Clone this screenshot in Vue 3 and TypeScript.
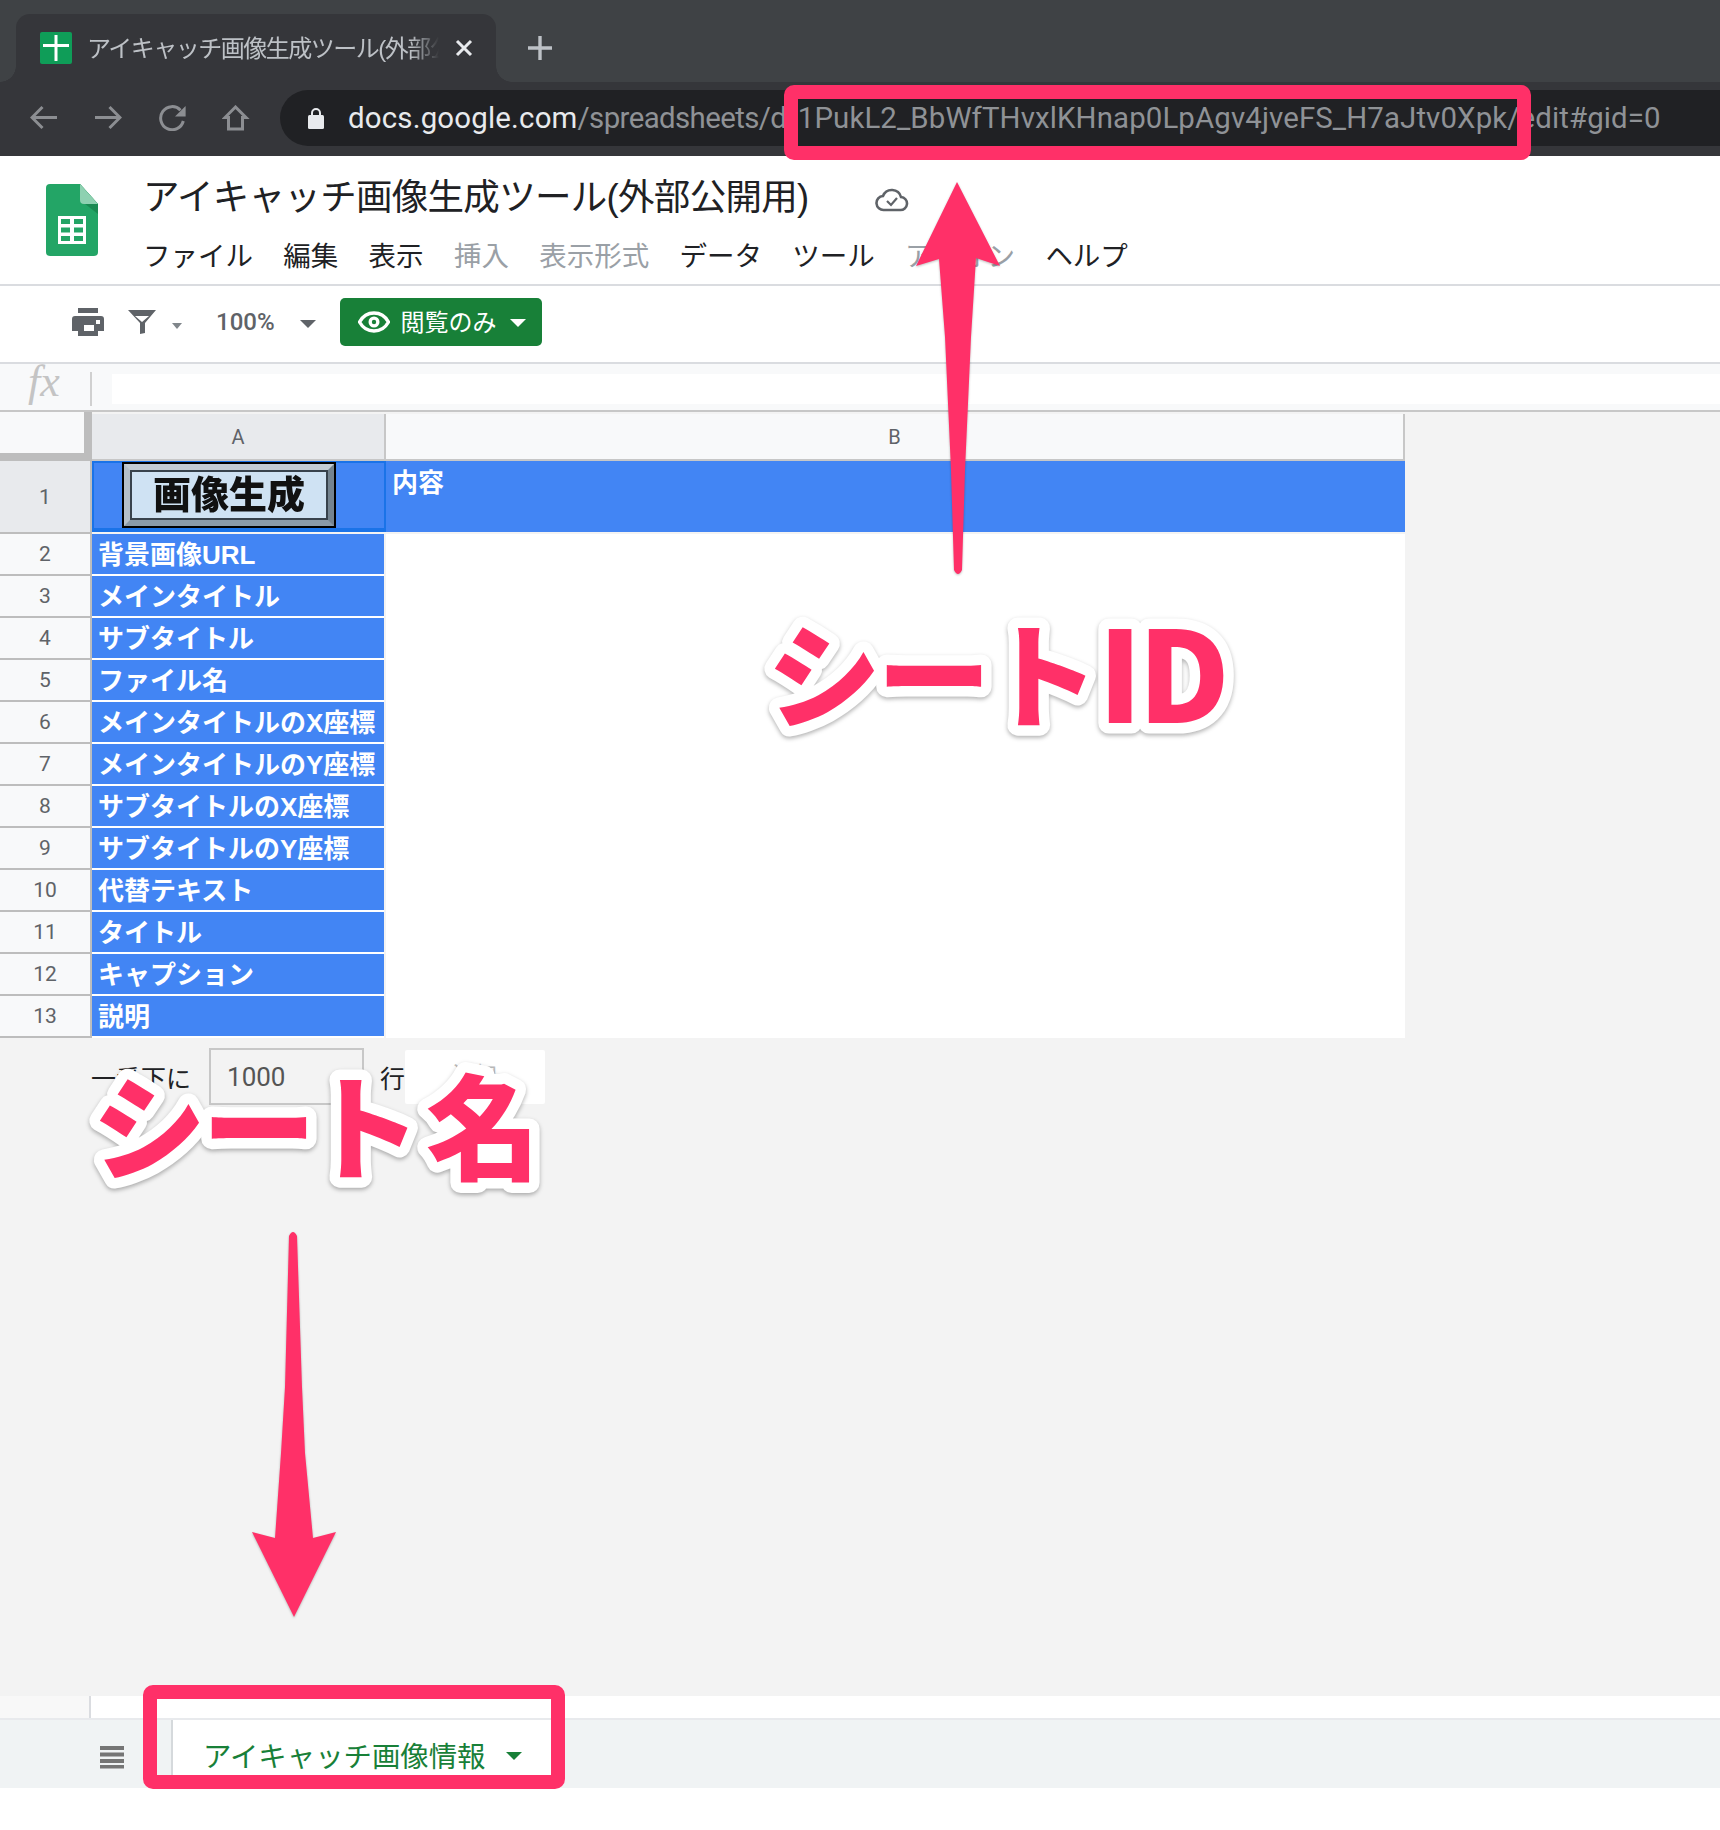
<template>
  <div class="page">
    <div class="tabstrip">
      <div class="tab">
        <svg class="favicon" viewBox="0 0 32 32"><rect width="32" height="32" rx="2" fill="#0f9d58" /><path d="M14.5 3h3v26h-3zM3 12h26v3H3z" fill="#fff" /></svg>
        <span class="tab-title">アイキャッチ画像生成ツール(外部公開用)</span>
        <svg class="tab-close" viewBox="0 0 18 18"><path d="M2 2l14 14M16 2L2 16" stroke="#e8eaed" stroke-width="3" fill="none" /></svg>
      </div>
      <svg class="newtab" viewBox="0 0 24 24"><path d="M12 0v24M0 12h24" stroke="#bdc1c6" stroke-width="3.4" fill="none" /></svg>
    </div>

    <div class="navbar">
      <div class="navicons">
        <svg viewBox="0 0 28 26"><path d="M27 12.500H2M12.500 2L2 12.500 12.500 23" /></svg>
        <svg viewBox="0 0 28 26"><path d="M1 12.500h25M15.500 2L26 12.500 15.500 23" /></svg>
        <svg viewBox="0 0 28 26"><path d="M22.500 5.200A11.500 11.500 0 1 0 25.300 16" /><path d="M27.600 1v10.600H17z" class="solid" /></svg>
        <svg viewBox="0 0 28 26"><path d="M13.500 2L3 12.500h3.500V24h14V12.500H24z" /></svg>
      </div>
      <div class="omnibox">
        <svg class="lock" viewBox="0 0 16 22"><path d="M4 9V6a4 4 0 0 1 8 0v3" fill="none" stroke="#e8eaed" stroke-width="2" /><rect y="8" width="16" height="14" rx="1.500" fill="#e8eaed" /></svg>
        <span class="url"><span class="host">docs.google.com</span><span class="path">/spreadsheets/d/</span><span class="sheet-id">1PukL2_BbWfTHvxlKHnap0LpAgv4jveFS_H7aJtv0Xpk/edit#gid=0</span></span>
      </div>
    </div>

    <header class="docbar">
      <svg class="logo" viewBox="0 0 52 72">
        <path d="M4 0h30l18 20v48a4 4 0 0 1-4 4H4a4 4 0 0 1-4-4V4a4 4 0 0 1 4-4z" fill="#23a566" />
        <path d="M34 0l18 20v10L34 16z" fill="#1a8a52" />
        <path d="M34 0l18 20H38a4 4 0 0 1-4-4z" fill="#8ed1b1" />
        <path d="M12 32h28v28H12z" fill="#fff" />
        <path d="M15 35h9v5h-9zM28 35h9v5h-9zM15 43.500h9v5h-9zM28 43.500h9v5h-9zM15 52h9v5h-9zM28 52h9v5h-9z" fill="#23a566" />
      </svg>
      <div class="docmeta">
        <div class="doctitle">
          <span>アイキャッチ画像生成ツール(外部公開用)</span>
          <svg class="cloud" viewBox="0 0 34 24"><path d="M9 22a7 7 0 0 1-1-14 9.500 9.500 0 0 1 18 1 6.500 6.500 0 0 1-1 13z" fill="none" stroke="#5f6368" stroke-width="2.600" /><path d="M12 13l4 4 6-7" fill="none" stroke="#5f6368" stroke-width="2.200" /></svg>
        </div>
        <nav class="menu">
          <span v-for="m in menu" :key="m.label" :class="{ off: m.off }">{{ m.label }}</span>
        </nav>
      </div>
    </header>

    <div class="toolbar">
      <svg class="ic-print" viewBox="0 0 32 28"><path d="M6 0h20v5H6zM3 8h26a3 3 0 0 1 3 3v12h-6v5H6v-5H0V11a3 3 0 0 1 3-3zm9 9v6h10v-6zm12-5v4h4v-4z" fill="#5f6368" fill-rule="evenodd" /></svg>
      <svg class="ic-filter" viewBox="0 0 28 24"><path d="M0 0h28L17 13v10l-5 1V13zM7 6l7 6 7-6z" fill="#5f6368" fill-rule="evenodd" /></svg>
      <i class="caret small"></i>
      <span class="zoom-value">100%</span>
      <i class="caret"></i>
      <button class="viewonly">
        <svg viewBox="0 0 32 22"><path d="M16 2C9 2 4 6.500 1.500 11 4 15.500 9 20 16 20s12-4.500 14.500-9C28 6.500 23 2 16 2z" fill="none" stroke="#fff" stroke-width="3.400" /><circle cx="16" cy="11" r="5.500" fill="#fff" /><circle cx="16" cy="11" r="2.200" fill="#188038" /></svg>
        <span>閲覧のみ</span>
        <i class="caret white"></i>
      </button>
    </div>

    <div class="formulabar">
      <span class="fx">fx</span>
      <div class="formula-input"></div>
    </div>

    <main class="sheet">
      <div class="grid">
        <div class="corner"></div>
        <div class="colhead selected">A</div>
        <div class="colhead">B</div>

        <div class="rowhead selected">1</div>
        <div class="cell-a first">
          <div class="gen-button">
            <div class="gen-face">画像生成</div>
          </div>
        </div>
        <div class="cell-b first">内容</div>

        <template v-for="(label, i) in rows" :key="label">
          <div class="rowhead">{{ i + 2 }}</div>
          <div class="cell-a">{{ label }}</div>
          <div class="cell-b"></div>
        </template>
      </div>

      <div class="addrows">
        <span>一番下に</span>
        <div class="addcount">1000</div>
        <span>行</span>
        <div class="addbtn">追加</div>
      </div>
    </main>

    <div class="scrollrow"><div class="scroll-left"></div></div>

    <footer class="sheetbar">
      <svg class="allsheets" viewBox="0 0 24 24"><path d="M0 1h24v4H0zM0 7.500h24v4H0zM0 14h24v4H0zM0 20h24v3.500H0z" fill="#757575" /></svg>
      <div class="sheettab">
        <span>アイキャッチ画像情報</span>
        <i class="caret green"></i>
      </div>
    </footer>

    <svg class="annotations" viewBox="0 0 1720 1830">
      <rect class="box" x="791" y="92" width="733" height="61" rx="3" />
      <rect class="box" x="150" y="1692" width="408" height="90" rx="3" />
      <path class="arrow" d="M957 182L1000 266 976 258 971 337 965 470 962 570Q958 578 954 570L951 470 945 337 939 259 916 266z" />
      <path class="arrow" d="M289 1236Q293 1228 297 1236L302 1387 305 1453 313 1538 336 1532 294 1617 252 1532 275 1538 281 1453 285 1387z" />
      <text class="big" x="767 877 985" y="718.500">シート<tspan class="latin" x="1098" y="723">I</tspan><tspan class="latin" x="1138" y="723">D</tspan></text>
      <text class="big" x="92 202 307 426" y="1170.500">シート名</text>
    </svg>
  </div>
</template>

<script setup lang="ts">
const menu = [
  { label: 'ファイル' },
  { label: '編集' },
  { label: '表示' },
  { label: '挿入', off: true },
  { label: '表示形式', off: true },
  { label: 'データ' },
  { label: 'ツール' },
  { label: 'アドオン', off: true },
  { label: 'ヘルプ' },
]

const rows = [
  '背景画像URL',
  'メインタイトル',
  'サブタイトル',
  'ファイル名',
  'メインタイトルのX座標',
  'メインタイトルのY座標',
  'サブタイトルのX座標',
  'サブタイトルのY座標',
  '代替テキスト',
  'タイトル',
  'キャプション',
  '説明',
]
</script>

<style>
html,
body {
  margin: 0;
  background: #fff;
}
</style>

<style scoped>
.page {
  position: relative;
  width: 1720px;
  height: 1830px;
  display: flex;
  flex-direction: column;
  overflow: hidden;
  background: #fff;
  font-family: "Liberation Sans", "Noto Sans CJK JP", sans-serif;
}

.tabstrip {
  height: 82px;
  flex: none;
  display: flex;
  background: #3f4245;
  padding-left: 16px;
  box-sizing: border-box;
}

.tab {
  position: relative;
  width: 480px;
  height: 68px;
  margin-top: 14px;
  display: flex;
  align-items: center;
  padding-left: 24px;
  box-sizing: border-box;
  background: #35363a;
  border-radius: 14px 14px 0 0;
}

.tab::before,
.tab::after {
  content: "";
  position: absolute;
  bottom: 0;
  width: 16px;
  height: 16px;
}

.tab::before {
  left: -16px;
  background: radial-gradient(circle at 0 0, #3f4245 15.500px, #35363a 16px);
}

.tab::after {
  right: -16px;
  background: radial-gradient(circle at 100% 0, #3f4245 15.500px, #35363a 16px);
}

.favicon {
  width: 32px;
  height: 32px;
  flex: none;
}

.tab-title {
  width: 352px;
  margin: -4px 0 0 15px;
  flex: none;
  overflow: hidden;
  white-space: nowrap;
  font-size: 24px;
  letter-spacing: -1.500px;
  color: #bdc1c6;
  -webkit-mask-image: linear-gradient(to right, #000 92%, transparent);
  mask-image: linear-gradient(to right, #000 92%, transparent);
}

.tab-close {
  width: 18px;
  height: 18px;
  margin-left: 16px;
  flex: none;
}

.newtab {
  width: 24px;
  height: 24px;
  margin: 36px 0 0 32px;
}

.navbar {
  height: 74px;
  flex: none;
  display: flex;
  background: #35363a;
}

.navicons {
  width: 280px;
  flex: none;
  display: flex;
  gap: 36px;
  padding: 23px 0 0 30px;
  box-sizing: border-box;
}

.navicons svg {
  width: 28px;
  height: 26px;
  fill: none;
  stroke: #8c8e92;
  stroke-width: 3;
}

.navicons .solid {
  fill: #8c8e92;
  stroke: none;
}

.omnibox {
  flex: 1;
  height: 56px;
  margin-top: 8px;
  display: flex;
  align-items: center;
  padding-left: 28px;
  background: #202124;
  border-radius: 28px 0 0 28px;
}

.lock {
  width: 16px;
  height: 22px;
  flex: none;
}

.url {
  margin-left: 24px;
  font-family: Roboto, "Liberation Sans", sans-serif;
  font-size: 29.400px;
  white-space: nowrap;
  color: #8f9296;
}

.host {
  color: #e8eaed;
  letter-spacing: 0.200px;
}

.path {
  letter-spacing: -0.600px;
}

.sheet-id {
  letter-spacing: 0.120px;
}

.docbar {
  height: 130px;
  flex: none;
  display: flex;
  box-sizing: border-box;
  border-bottom: 2px solid #dadce0;
  padding: 28px 0 0 46px;
}

.logo {
  width: 52px;
  height: 72px;
  flex: none;
}

.docmeta {
  margin-left: 45px;
}

.doctitle {
  display: flex;
  align-items: center;
  height: 36px;
  margin-top: -8px;
  font-size: 36.500px;
  letter-spacing: -0.700px;
  color: #202124;
  white-space: nowrap;
}

.cloud {
  width: 34px;
  height: 24px;
  margin: 12px 0 0 67px;
}

.menu {
  display: flex;
  gap: 30.300px;
  margin-top: 28px;
  font-size: 27.500px;
  line-height: 34px;
  color: #202124;
  white-space: nowrap;
}

.menu .off {
  color: #9aa0a6;
}

.toolbar {
  height: 78px;
  flex: none;
  display: flex;
  align-items: center;
  box-sizing: border-box;
  border-bottom: 2px solid #dadce0;
  padding: 0 0 4px 72px;
}

.ic-print {
  width: 32px;
  height: 28px;
}

.ic-filter {
  width: 28px;
  height: 24px;
  margin-left: 24px;
}

.caret {
  display: block;
  width: 0;
  height: 0;
  border-left: 8px solid transparent;
  border-right: 8px solid transparent;
  border-top: 8px solid #5f6368;
}

.caret.small {
  margin: 8px 0 0 16px;
  border-width: 6px 5px 0;
  border-top-color: #80868b;
}

.caret.white {
  border-top-color: #fff;
  margin: 2px 0 0 13px;
}

.caret.green {
  border-top-color: #188038;
  margin: 4px 0 0 20px;
}

.zoom-value {
  margin-left: 34px;
  font-family: Roboto, sans-serif;
  font-weight: 500;
  font-size: 24px;
  color: #5f6368;
}

.toolbar .zoom-value + .caret {
  margin: 4px 0 0 25px;
}

.viewonly {
  width: 202px;
  height: 48px;
  margin-left: 24px;
  display: flex;
  align-items: center;
  padding: 0 0 0 18px;
  border: 0;
  border-radius: 5px;
  background: #188038;
  color: #fff;
  font: 24px "Liberation Sans", "Noto Sans CJK JP", sans-serif;
}

.viewonly svg {
  width: 32px;
  height: 22px;
}

.viewonly span {
  margin: 0 0 3px 11px;
}

.formulabar {
  height: 48px;
  flex: none;
  display: flex;
  box-sizing: border-box;
  background: #f8f9fa;
  border-bottom: 2px solid #c7c7c7;
}

.fx {
  width: 92px;
  height: 34px;
  margin-top: 8px;
  box-sizing: border-box;
  border-right: 2px solid #d0d0d0;
  padding-left: 28px;
  font: italic 44px/20px "Liberation Serif", serif;
  color: #c4c4c4;
}

.formula-input {
  flex: 1;
  height: 30px;
  margin: 10px 0 0 20px;
  background: #fff;
}

.sheet {
  flex: 1;
  background: #f3f3f3;
}

.grid {
  display: grid;
  width: 1405px;
  grid-template-columns: 92px 294px 1019px;
  grid-template-rows: 49px 73px repeat(12, 42px);
}

.corner {
  box-sizing: border-box;
  background: #f8f9fa;
  border-right: 8px solid #bdbdbd;
  border-bottom: 8px solid #bdbdbd;
}

.colhead {
  display: flex;
  align-items: center;
  justify-content: center;
  margin-top: 2px;
  box-sizing: border-box;
  background: #f8f9fa;
  border-right: 2px solid #c7c7c7;
  border-bottom: 2px solid #c7c7c7;
  font-family: Roboto, sans-serif;
  font-size: 20px;
  color: #5f6368;
}

.colhead.selected,
.rowhead.selected {
  background: #e8eaed;
}

.rowhead {
  display: flex;
  align-items: center;
  justify-content: center;
  box-sizing: border-box;
  background: #f8f9fa;
  border-right: 2px solid #bdbdbd;
  border-bottom: 2px solid #bdbdbd;
  font-family: Roboto, sans-serif;
  font-size: 21px;
  color: #5f6368;
}

.cell-a {
  display: flex;
  align-items: center;
  box-sizing: border-box;
  background: #4285f4;
  border-bottom: 2px solid #fff;
  margin-right: 2px;
  padding: 0 0 3px 6px;
  font-size: 26px;
  font-weight: 700;
  color: #fff;
  white-space: nowrap;
}

.cell-a.first {
  margin: 0 0 2px;
  padding: 0 0 0 28px;
  align-items: flex-start;
  border: 2px solid #1a73e8;
  border-bottom-width: 4px;
}

.cell-b {
  background: #fff;
}

.cell-b.first {
  margin-bottom: 2px;
  padding: 1px 0 0 6px;
  background: #4285f4;
  font-size: 26px;
  font-weight: 700;
  color: #fff;
}

.gen-button {
  width: 214px;
  height: 66px;
  margin-top: -1px;
  flex: none;
  box-sizing: border-box;
  border: 8px solid;
  border-color: #c3ccd4 #74838f #8a9aa8 #b4bfc9;
  outline: 2px solid #000;
  outline-offset: -2px;
}

.gen-face {
  height: 100%;
  display: flex;
  align-items: center;
  justify-content: center;
  box-sizing: border-box;
  background: #cfe2f3;
  border: 2px solid #38424c;
  padding: 0 0 7px 0;
  color: #111;
  font-size: 38px;
  font-weight: 900;
  filter: blur(0.600px);
}

.addrows {
  display: flex;
  align-items: center;
  height: 57px;
  margin-top: 10px;
  padding-left: 91px;
  font-size: 25px;
  color: #202124;
}

.addcount {
  width: 155px;
  height: 57px;
  margin-left: 18px;
  box-sizing: border-box;
  border: 2px solid #c7c7c7;
  padding-left: 16px;
  font: 26px/55px Roboto, sans-serif;
  color: #555;
}

.addrows > span:nth-of-type(2) {
  margin-left: 16px;
}

.addbtn {
  width: 140px;
  height: 54px;
  line-height: 50px;
  text-align: center;
  border-radius: 2px;
  background: #fff;
  color: #bbb;
  font-size: 22px;
}

.scrollrow {
  height: 22px;
  flex: none;
  background: #fff;
}

.scroll-left {
  width: 91px;
  height: 100%;
  box-sizing: border-box;
  background: #f8f8f8;
  border-right: 2px solid #dadce0;
}

.sheetbar {
  height: 70px;
  flex: none;
  margin-bottom: 42px;
  display: flex;
  box-sizing: border-box;
  background: #f0f3f4;
  border-top: 2px solid #e8eaed;
  padding-left: 100px;
}

.allsheets {
  width: 24px;
  height: 24px;
  margin-top: 25px;
}

.sheettab {
  width: 385px;
  margin-left: 47px;
  display: flex;
  align-items: center;
  padding: 0 0 0 30px;
  box-sizing: border-box;
  background: #fff;
  border-left: 2px solid #d5d9dc;
  font-size: 28.400px;
  color: #188038;
  white-space: nowrap;
}

.annotations {
  position: absolute;
  top: 0;
  left: 0;
  width: 1720px;
  height: 1830px;
}

.box {
  fill: none;
  stroke: #ff3068;
  stroke-width: 14px;
}

.arrow {
  fill: #ff3068;
  filter: drop-shadow(0 1px 1px rgba(0, 0, 0, 0.25));
}

.big {
  font-family: "Noto Sans CJK JP", sans-serif;
  font-size: 114px;
  font-weight: 900;
  fill: #ff3068;
  stroke: #fff;
  stroke-width: 21px;
  stroke-linejoin: round;
  paint-order: stroke;
  filter: drop-shadow(0 2px 2px rgba(0, 0, 0, 0.3));
}

.latin {
  font-size: 126px;
}
</style>
